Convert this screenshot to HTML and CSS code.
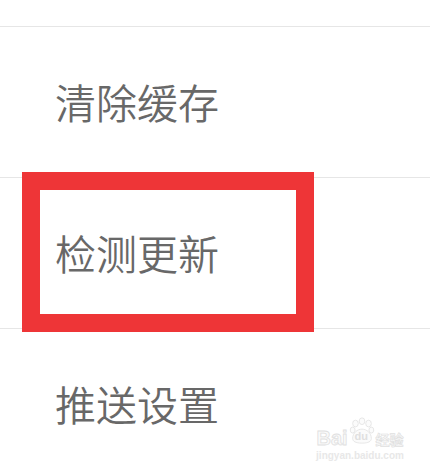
FILE: index.html
```html
<!DOCTYPE html>
<html lang="zh-CN">
<head>
<meta charset="utf-8">
<title>设置</title>
<link rel="stylesheet" href="styles.css">
</head>
<body>
<div class="list">
  <div class="spacer"></div>
  <div class="row"><span class="label">清除缓存</span></div>
  <div class="row"><span class="label">检测更新</span></div>
  <div class="row"><span class="label">推送设置</span></div>
</div>
<div class="highlight"></div>
<div class="watermark">
  <div class="wm-line">
    <span class="wm-bai">Bai</span>
    <span class="wm-du">
      <svg class="wm-paw" width="28" height="30" viewBox="0 0 30 30">
        <g fill="#fbfbfb" stroke="#e2e2e2" stroke-width="0.9">
          <ellipse cx="8" cy="7" rx="3" ry="3.6"/>
          <ellipse cx="15" cy="4.5" rx="3" ry="3.6"/>
          <ellipse cx="22" cy="7" rx="3" ry="3.6"/>
          <ellipse cx="5" cy="14" rx="2.6" ry="3.2"/>
          <ellipse cx="25" cy="14" rx="2.6" ry="3.2"/>
          <path d="M5 23c0-6 5-10 10-10s10 4 10 10c0 3-3 5-10 5S5 26 5 23z"/>
        </g>
      </svg>
      <span class="wm-dutext">du</span>
    </span>
    <span class="wm-jy">经验</span>
  </div>
  <div class="wm-url">jingyan.baidu.com</div>
</div>
</body>
</html>
```

FILE: styles.css
```css
html, body {
  margin: 0;
  padding: 0;
  background: #ffffff;
  width: 430px;
  height: 470px;
  overflow: hidden;
}

body {
  position: relative;
  font-family: "Noto Sans CJK SC", "Noto Sans", sans-serif;
}

.list {
  display: flex;
  flex-direction: column;
}

.spacer {
  height: 26px;
  border-bottom: 1px solid #e6e6e6;
}

.row {
  height: 150px;
  border-bottom: 1px solid #e6e6e6;
  display: flex;
  align-items: center;
  padding-left: 55px;
}

.label {
  font-size: 41px;
  font-weight: 350;
  line-height: 1;
  color: #686868;
  margin-top: -1px;
}

.highlight {
  position: absolute;
  left: 22px;
  top: 172px;
  width: 256px;
  height: 124px;
  border: 18px solid #ee3537;
}

.watermark {
  position: absolute;
  left: 314px;
  top: 416px;
  width: 92px;
  display: flex;
  flex-direction: column;
  align-items: center;
  white-space: nowrap;
}

.wm-line {
  display: flex;
  align-items: flex-end;
  height: 32px;
  white-space: nowrap;
}

.wm-bai {
  font-family: "Liberation Sans", sans-serif;
  font-weight: bold;
  font-size: 20px;
  line-height: 1;
  color: #fafafa;
  -webkit-text-stroke: 0.8px #e0e0e0;
}

.wm-du {
  position: relative;
  flex: none;
  width: 28px;
  height: 32px;
}

.wm-paw {
  position: absolute;
  left: 0;
  top: 0;
}

.wm-dutext {
  position: absolute;
  left: 7px;
  top: 15px;
  font-family: "Liberation Sans", sans-serif;
  font-weight: bold;
  font-size: 11px;
  line-height: 1;
  color: #e0e0e0;
}

.wm-jy {
  flex: none;
  font-family: "Noto Sans CJK SC", sans-serif;
  font-weight: bold;
  font-size: 14px;
  line-height: 1;
  color: #fafafa;
  -webkit-text-stroke: 0.7px #e0e0e0;
  margin-bottom: 2px;
}

.wm-url {
  font-family: "Liberation Sans", sans-serif;
  font-weight: bold;
  font-size: 10px;
  line-height: 1;
  color: #e8e8e8;
  margin-top: 3px;
}
```
